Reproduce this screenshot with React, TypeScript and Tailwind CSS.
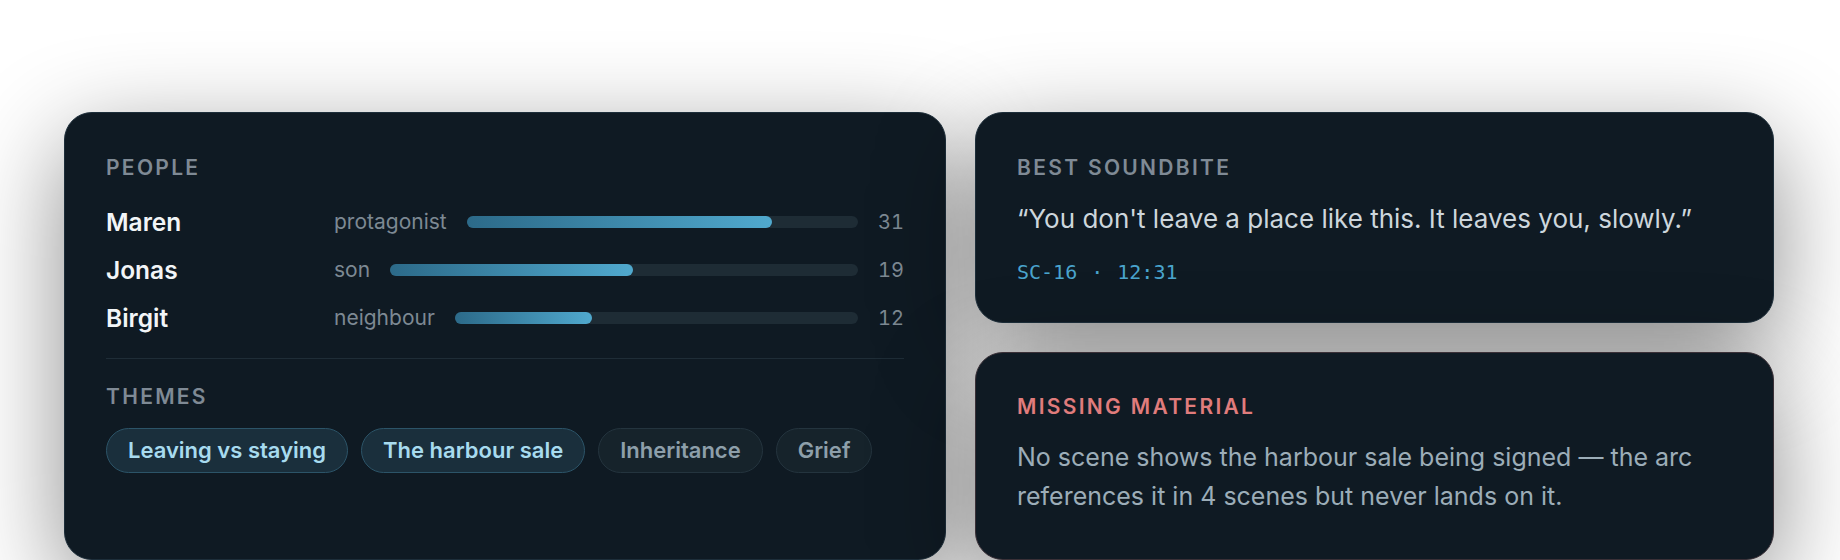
import React from 'react';

type Person = { name: string; role: string; count: number; fill: number };

const people: Person[] = [
  { name: 'Maren', role: 'protagonist', count: 31, fill: 78 },
  { name: 'Jonas', role: 'son', count: 19, fill: 52 },
  { name: 'Birgit', role: 'neighbour', count: 12, fill: 34 },
];

const themes = [
  { label: 'Leaving vs staying', active: true },
  { label: 'The harbour sale', active: true },
  { label: 'Inheritance', active: false },
  { label: 'Grief', active: false },
];

const Label = ({ children, tone = 'muted' }: { children: React.ReactNode; tone?: 'muted' | 'alert' }) => (
  <h3
    className={`text-[21px] leading-[26px] font-semibold tracking-[0.11em] uppercase ${
      tone === 'alert' ? 'text-[#e07c7c]' : 'text-[#7f8a95]'
    }`}
  >
    {children}
  </h3>
);

const App = () => {
  return (
    <div className="min-h-[560px] bg-white overflow-hidden" style={{ fontFamily: 'Inter, "Noto Sans", sans-serif' }}>
      <div className="flex gap-[29px] pl-[64px] pt-[112px]">
        {/* People + themes */}
        <section className="w-[882px] shrink-0 rounded-[28px] border border-[#1d2e3a] bg-[#0f1a23] px-[41px] pt-[42px] shadow-[0_30px_100px_rgba(0,0,0,0.46)]">
          <Label>People</Label>
          <div className="mt-[25px] flex flex-col gap-[16px]">
            {people.map((p) => (
              <div key={p.name} className="flex items-center gap-[20px] h-[32px]">
                <span className="w-[208px] shrink-0 text-[24.5px] leading-[32px] font-semibold text-[#f2f5f7]">{p.name}</span>
                <span className="text-[21px] text-[#7d8993]">{p.role}</span>
                <div className="flex-1 h-[12px] rounded-full bg-[#1e2c35]">
                  <div
                    className="h-full rounded-full bg-gradient-to-r from-[#2c6a89] to-[#50a9ce]"
                    style={{ width: `${p.fill}%` }}
                  />
                </div>
                <span className="w-[26px] text-right text-[20px] tabular-nums text-[#7d8993]">{p.count}</span>
              </div>
            ))}
          </div>
          <div className="mt-[24px] h-px bg-[#1f2d37]" />
          <div className="mt-[25px]">
            <Label>Themes</Label>
          </div>
          <div className="mt-[18px] flex flex-wrap gap-[13px]">
            {themes.map((t) => (
              <span
                key={t.label}
                className={`flex h-[45px] items-center rounded-full border px-[21px] text-[22px] font-semibold ${
                  t.active
                    ? 'border-[#2c5468] bg-[#1a2f3c] text-[#a7dbef]'
                    : 'border-[#24343e] bg-[#16232b] text-[#8d9faa]'
                }`}
              >
                {t.label}
              </span>
            ))}
          </div>
        </section>

        <div className="flex w-[799px] shrink-0 flex-col gap-[29px]">
          {/* Soundbite */}
          <section className="rounded-[28px] border border-[#1d2e3a] bg-[#0f1a23] px-[41px] pt-[42px] pb-[36px] shadow-[0_30px_100px_rgba(0,0,0,0.46)]">
            <Label>Best soundbite</Label>
            <p className="mt-[20px] text-[26px] leading-[36px] text-[#cdd6dc]">
              “You don't leave a place like this. It leaves you, slowly.”
            </p>
            <div
              className="mt-[21px] flex text-[20px] leading-[28px] text-[#4aa4cd]"
              style={{ fontFamily: '"DejaVu Sans Mono", "Liberation Mono", monospace' }}
            >
              <span>SC-16</span>
              <span className="mx-[14px]">·</span>
              <span>12:31</span>
            </div>
          </section>

          {/* Missing material */}
          <section className="rounded-[28px] border border-[#3a3037] bg-[#0f1a23] px-[41px] pt-[41px] pb-[43px] shadow-[0_30px_100px_rgba(0,0,0,0.46)]">
            <Label tone="alert">Missing material</Label>
            <p className="mt-[18px] text-[25px] leading-[39px] text-[#9cadb8]">
              No scene shows the harbour sale being signed — the arc references it in 4 scenes but never lands on it.
            </p>
          </section>
        </div>
      </div>
    </div>
  );
};

export default App;
